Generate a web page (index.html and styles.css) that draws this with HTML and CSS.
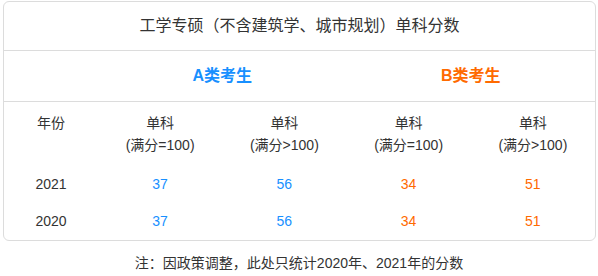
FILE: index.html
```html
<!DOCTYPE html>
<html lang="zh-CN">
<head>
<meta charset="utf-8">
<title>单科分数</title>
<link rel="stylesheet" href="styles.css">
</head>
<body>
<div class="card">
  <div class="title">工学专硕（不含建筑学、城市规划）单科分数</div>
  <div class="row groups">
    <div></div>
    <div class="group group-a">A类考生</div>
    <div class="group group-b">B类考生</div>
  </div>
  <div class="row head">
    <div class="cell">年份</div>
    <div class="cell">单科<br>(满分=100)</div>
    <div class="cell">单科<br>(满分&gt;100)</div>
    <div class="cell">单科<br>(满分=100)</div>
    <div class="cell">单科<br>(满分&gt;100)</div>
  </div>
  <div class="row data">
    <div class="cell">2021</div>
    <div class="cell a">37</div>
    <div class="cell a">56</div>
    <div class="cell b">34</div>
    <div class="cell b">51</div>
  </div>
  <div class="row data last">
    <div class="cell">2020</div>
    <div class="cell a">37</div>
    <div class="cell a">56</div>
    <div class="cell b">34</div>
    <div class="cell b">51</div>
  </div>
</div>
<p class="note">注：因政策调整，此处只统计2020年、2021年的分数</p>
</body>
</html>
```
FILE: styles.css
```css
html, body {
  margin: 0;
  padding: 0;
  background: #fff;
}
body {
  font-family: "Liberation Sans", "Noto Sans CJK SC", sans-serif;
  color: #333;
  font-size: 14px;
  line-height: 22px;
}
.card {
  margin: 1px 2px 0 3px;
  border: 1px solid #dcdcdc;
  border-radius: 6px;
  overflow: hidden;
}
.title {
  height: 48px;
  line-height: 48px;
  font-size: 16px;
  text-align: center;
  border-bottom: 1px solid #dcdcdc;
}
.row {
  display: grid;
  grid-template-columns: 94px repeat(4, 1fr);
  text-align: center;
}
.groups {
  height: 50px;
  align-items: center;
  border-bottom: 1px solid #dcdcdc;
}
.group {
  grid-column: span 2;
  font-size: 16px;
  font-weight: bold;
  line-height: 22px;
}
.group-a { color: #1890ff; }
.group-b { color: #ff6a00; }
.head {
  padding: 10px 0 9px;
  align-items: start;
}
.data {
  height: 37px;
  align-items: center;
}
.last {
  margin-bottom: 1px;
}
.a { color: #1890ff; }
.b { color: #ff6a00; }
.note {
  margin: 11px 0 0;
  text-align: center;
}
```
